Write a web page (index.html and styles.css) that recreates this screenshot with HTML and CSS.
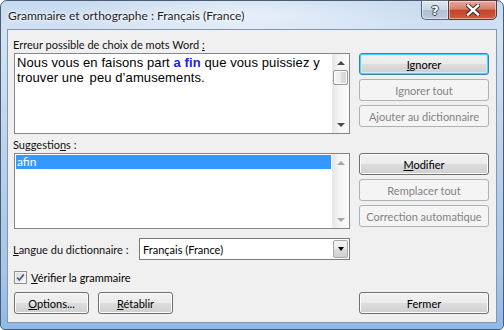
FILE: index.html
```html
<!DOCTYPE html>
<html lang="fr">
<head>
    <meta charset="UTF-8">
    <title>Grammaire et orthographe</title>
    <link rel="stylesheet" href="styles.css">
</head>
<body>
    <div class="window">
        <div class="titlebar">
            <span class="title">Grammaire et orthographe : Français (France)</span>
            <div class="caption-buttons">
                <span class="cap-btn help">?</span>
                <span class="cap-btn close">
                    <svg width="14" height="12" viewBox="0 0 14 12">
                        <path d="M2 1.5 L12 10.5 M12 1.5 L2 10.5" stroke="#3a2a2a" stroke-width="4.4" stroke-linecap="square"/>
                        <path d="M2 1.5 L12 10.5 M12 1.5 L2 10.5" stroke="#fff" stroke-width="2.4" stroke-linecap="square"/>
                    </svg>
                </span>
            </div>
        </div>

        <div class="client">
            <!-- error text -->
            <div class="row">
                <div class="left">
                    <div class="label">Erreur possible de choix de mots Word <u>:</u></div>
                    <div class="box editbox">
                        <div class="doc-text">Nous vous en faisons part <b>a fin</b> que vous puissiez y<br>trouver une <span class="gap"></span>peu d’amusements.</div>
                        <div class="scrollbar">
                            <span class="arrow up"></span>
                            <span class="thumb"></span>
                            <span class="arrow down"></span>
                        </div>
                    </div>
                </div>
                <div class="side">
                    <button class="btn default"><u>I</u>gnorer</button>
                    <button class="btn" disabled>Ignorer tout</button>
                    <button class="btn" disabled>Ajouter au dictionnaire</button>
                </div>
            </div>

            <!-- suggestions -->
            <div class="row second">
                <div class="left">
                    <div class="label">Suggestio<u>n</u>s :</div>
                    <div class="box listbox">
                        <ul class="items">
                            <li class="selected">afin</li>
                        </ul>
                        <div class="scrollbar disabled">
                            <span class="arrow up"></span>
                            <span class="arrow down"></span>
                        </div>
                    </div>
                </div>
                <div class="side">
                    <button class="btn"><u>M</u>odifier</button>
                    <button class="btn" disabled>Remplacer tout</button>
                    <button class="btn" disabled>Correction automatique</button>
                </div>
            </div>

            <div class="lang-row">
                <span class="label"><u>L</u>angue du dictionnaire :</span>
                <div class="combo">
                    <span class="combo-value">Français (France)</span>
                    <span class="combo-btn"><span class="arrow down black"></span></span>
                </div>
            </div>

            <label class="check-row">
                <span class="checkbox">
                    <svg width="9" height="9" viewBox="0 0 9 9">
                        <path d="M1.2 4.6 L3.4 7 L7.8 1.4" fill="none" stroke="#4a5f8f" stroke-width="1.7"/>
                    </svg>
                </span>
                <span><u>V</u>érifier la grammaire</span>
            </label>

            <div class="row bottom">
                <div class="left bottom-left">
                    <button class="btn small"><u>O</u>ptions...</button>
                    <button class="btn small"><u>R</u>établir</button>
                </div>
                <div class="side bottom-side">
                    <button class="btn">Fermer</button>
                </div>
            </div>
        </div>
    </div>
</body>
</html>
```

FILE: styles.css
```css
body {
    margin: 0;
    padding: 0;
    background: #fff;
}

.window {
    width: 504px;
    height: 330px;
    box-sizing: border-box;
    border: 1px solid #4b5d73;
    border-radius: 7px 7px 5px 5px;
    padding: 0 6px 6px 6px;
    background: linear-gradient(to bottom, #c6daf0 0%, #d4e3f4 10%, #b8d1ed 50%, #a3c4ea 85%, #8fb9e8 100%);
    display: flex;
    flex-direction: column;
    font-family: "Segoe UI", Lato, "Liberation Sans", sans-serif;
    font-size: 11px;
    color: #000;
}

.titlebar {
    height: 28px;
    display: flex;
    justify-content: space-between;
    align-items: flex-start;
    background: radial-gradient(ellipse 180px 30px at 240px 14px, rgba(255, 255, 255, 0.55), rgba(255, 255, 255, 0));
}

.title {
    margin: 7px 0 0 1px;
    font-size: 12px;
    line-height: 16px;
    color: #1e1e1e;
    text-shadow: 0 0 6px rgba(255, 255, 255, 0.9), 0 0 3px #fff;
}

.caption-buttons {
    display: flex;
    margin-top: -1px;
}

.cap-btn {
    height: 18px;
    display: flex;
    align-items: center;
    justify-content: center;
    border: 1px solid #55667c;
    box-sizing: content-box;
    box-shadow: inset 0 0 0 1px rgba(255, 255, 255, 0.45);
}

.help {
    width: 26px;
    border-right: none;
    border-radius: 0 0 0 5px;
    background: linear-gradient(to bottom, #dfe8f2 0%, #c9d6e5 48%, #b0c1d5 52%, #bccbdc 100%);
    font-family: "DejaVu Sans", sans-serif;
    font-weight: bold;
    font-size: 13px;
    color: #fff;
    text-shadow: 0 0 1px #2c3a4c, 1px 0 0 #3a4a5e, -1px 0 0 #3a4a5e, 0 1px 0 #3a4a5e, 0 -1px 0 #3a4a5e;
}

.close {
    width: 47px;
    border-radius: 0 0 5px 0;
    border-color: #5a3a36;
    background: linear-gradient(to bottom, #e8a99b 0%, #d67f6b 45%, #c4432a 52%, #cf5d40 100%);
}

.client {
    flex: 1;
    border: 1px solid #8595ab;
    background: #f0f0f0;
    padding: 7px 7px 0 6px;
    display: flex;
    flex-direction: column;
}

.row {
    display: flex;
    gap: 9px;
}

.row.second {
    margin-top: 3px;
}

.left {
    width: 336px;
    display: flex;
    flex-direction: column;
}

.side {
    width: 130px;
    display: flex;
    flex-direction: column;
    gap: 4px;
    padding-top: 16px;
}

.label {
    line-height: 15px;
    margin-left: -1px;
    color: #111;
    white-space: nowrap;
}

.left .label {
    margin-bottom: 1px;
}

.box {
    background: #fff;
    border: 1px solid #828790;
    display: flex;
}

.editbox {
    height: 79px;
}

.doc-text {
    flex: 1;
    padding: 1px 0 0 2px;
    font-family: "Liberation Sans", Arial, sans-serif;
    font-size: 13px;
    line-height: 15px;
    letter-spacing: 0.1px;
    color: #000;
}

.doc-text b {
    color: #1d1de6;
}

.doc-text .gap {
    display: inline-block;
    width: 2px;
}

.scrollbar {
    width: 17px;
    display: flex;
    flex-direction: column;
    align-items: center;
    background: linear-gradient(to right, #e4e4e4, #f4f4f4 40%, #fafafa);
    box-shadow: inset 1px 0 0 #eaeaea;
}

.arrow {
    width: 0;
    height: 0;
    border-left: 4px solid transparent;
    border-right: 4px solid transparent;
}

.arrow.up {
    border-bottom: 4px solid #4a4a4a;
    margin-top: 7px;
}

.arrow.down {
    border-top: 4px solid #4a4a4a;
    margin-top: auto;
    margin-bottom: 6px;
}

.scrollbar.disabled .arrow.up {
    border-bottom-color: #a8a8a8;
}

.scrollbar.disabled .arrow.down {
    border-top-color: #a8a8a8;
}

.thumb {
    width: 13px;
    height: 13px;
    margin-top: 5px;
    border: 1px solid #979797;
    border-radius: 2px;
    background: linear-gradient(to right, #f6f6f6, #ececec 50%, #dcdcdc 51%, #d6d6d6);
    box-shadow: inset 0 0 0 1px #fcfcfc;
}

.listbox {
    height: 74px;
}

.items {
    flex: 1;
    list-style: none;
    margin: 0;
    padding: 1px 1px 0 1px;
}

.items li {
    height: 14px;
    line-height: 14px;
    padding-left: 1px;
    font-size: 12px;
}

.items li.selected {
    background: #3399ff;
    color: #fff;
}

.btn {
    height: 22px;
    padding: 0;
    border: 1px solid #707070;
    border-radius: 3px;
    background: linear-gradient(to bottom, #f2f2f2 0%, #ebebeb 48%, #dddddd 52%, #cfcfcf 100%);
    box-shadow: inset 0 0 0 1px #fcfcfc;
    font-family: inherit;
    font-size: 11px;
    color: #000;
    cursor: pointer;
}

.btn.default {
    border-color: #3c7fb1;
    box-shadow: inset 0 0 0 1px #4fd1f8, inset 0 0 0 2px #c9eefc;
}

.btn:disabled {
    border-color: #adb2b5;
    background: #f4f4f4;
    box-shadow: none;
    color: #838383;
    cursor: default;
}

.lang-row {
    display: flex;
    align-items: center;
    margin-top: 9px;
    width: 336px;
}

.lang-row .label {
    width: 126px;
}

.combo {
    flex: 1;
    height: 20px;
    border: 1px solid #7a7a7a;
    background: #fff;
    display: flex;
    align-items: center;
}

.combo-value {
    flex: 1;
    padding-left: 3px;
}

.combo-btn {
    width: 15px;
    height: 18px;
    margin-right: 1px;
    border: 1px solid #a9a9a9;
    border-radius: 2px;
    box-sizing: border-box;
    background: linear-gradient(to bottom, #f2f2f2 0%, #ebebeb 48%, #dddddd 52%, #cfcfcf 100%);
    display: flex;
    align-items: center;
    justify-content: center;
}

.arrow.black {
    border-left-width: 3.5px;
    border-right-width: 3.5px;
    border-top: 4px solid #000;
    margin: 0;
}

.check-row {
    display: flex;
    align-items: center;
    gap: 4px;
    margin-top: 11px;
    height: 13px;
}

.checkbox {
    width: 11px;
    height: 11px;
    border: 1px solid #8e8f8f;
    background: linear-gradient(135deg, #dcdcdc, #f6f6f6);
    box-shadow: inset 0 0 0 1px #f4f4f4;
    display: flex;
    align-items: center;
    justify-content: center;
}

.row.bottom {
    margin-top: 8px;
}

.bottom-left {
    flex-direction: row;
    gap: 9px;
}

.bottom-side {
    padding-top: 0;
}

.btn.small {
    width: 75px;
}
```
